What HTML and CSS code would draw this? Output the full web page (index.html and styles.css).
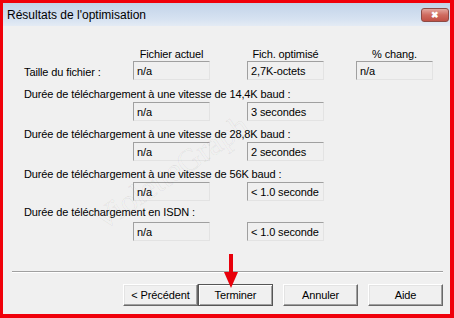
FILE: index.html
```html
<!DOCTYPE html>
<html lang="fr">
<head>
    <meta charset="UTF-8">
    <title>Résultats de l'optimisation</title>
    <link rel="stylesheet" href="styles.css">
</head>
<body>
    <div class="window">
        <div class="titlebar">
            <span class="title">Résultats de l'optimisation</span>
            <span class="close">&#10006;</span>
        </div>
        <div class="content">
            <div class="row heads">
                <span class="col-head">Fichier actuel</span>
                <span class="col-head gap1">Fich. optimisé</span>
                <span class="col-head gap2">% chang.</span>
            </div>
            <div class="row first">
                <span class="label-inline">Taille du fichier :</span>
                <span class="field">n/a</span>
                <span class="field gap1">2,7K-octets</span>
                <span class="field gap2">n/a</span>
            </div>

            <div class="label l2">Durée de téléchargement à une vitesse de 14,4K baud :</div>
            <div class="row boxes">
                <span class="field">n/a</span>
                <span class="field gap1">3 secondes</span>
            </div>

            <div class="label l3">Durée de téléchargement à une vitesse de 28,8K baud :</div>
            <div class="row boxes">
                <span class="field">n/a</span>
                <span class="field gap1">2 secondes</span>
            </div>

            <div class="label l4">Durée de téléchargement à une vitesse de 56K baud :</div>
            <div class="row boxes">
                <span class="field">n/a</span>
                <span class="field gap1">&lt; 1.0 seconde</span>
            </div>

            <div class="label l5">Durée de téléchargement en ISDN :</div>
            <div class="row boxes">
                <span class="field">n/a</span>
                <span class="field gap1">&lt; 1.0 seconde</span>
            </div>

            <div class="watermark">VioletteGraph</div>
        </div>
        <div class="footer">
            <div class="separator"></div>
            <div class="buttons">
                <button class="btn">&lt; Précédent</button>
                <button class="btn default">Terminer</button>
                <button class="btn spaced">Annuler</button>
                <button class="btn spaced">Aide</button>
                <svg class="arrow" width="16" height="34" viewBox="0 0 16 34">
                    <path d="M6 0 H10 V18 H15 L8 34 L1 18 H6 Z" fill="#e8000b"/>
                </svg>
            </div>
        </div>
    </div>
</body>
</html>
```

FILE: styles.css
```css
body {
    margin: 0;
    font-family: "Liberation Sans", Arial, sans-serif;
    font-size: 11px;
    letter-spacing: -0.12px;
    color: #000;
}
.window {
    width: 454px;
    height: 318px;
    box-sizing: border-box;
    border: 3px solid #f0000a;
    border-right-width: 4px;
    border-bottom-width: 4px;
    background-color: #f0f0f0;
    display: flex;
    flex-direction: column;
}
.titlebar {
    height: 23px;
    display: flex;
    align-items: center;
    padding: 0 0 0 4px;
    background: linear-gradient(#c2d3e8, #d6e2f1 70%, #e4ebf4);
}
.title {
    font-size: 12px;
    letter-spacing: 0;
}
.close {
    margin-left: auto;
    margin-right: 1px;
    width: 28px;
    height: 14px;
    box-sizing: border-box;
    border: 1px solid #8d4b45;
    border-radius: 3px;
    background: linear-gradient(#e4a79e, #cf6b5f 50%, #c05045);
    color: #fff;
    font-size: 9px;
    line-height: 12px;
    text-align: center;
    font-weight: bold;
}
.content {
    position: relative;
    padding: 21px 0 0 21px;
}
.row {
    display: flex;
    align-items: center;
}
.heads {
    height: 14px;
    padding-left: 109px;
}
.col-head {
    width: 77px;
    text-align: center;
}
.gap1 {
    margin-left: 37px;
}
.gap2 {
    margin-left: 32px;
}
.label-inline {
    width: 109px;
    padding-top: 3px;
}
.field {
    width: 77px;
    height: 19px;
    box-sizing: border-box;
    padding: 1px 0 0 3px;
    border: 1px solid;
    border-color: #a0a0a0 #e3e3e3 #e3e3e3 #a0a0a0;
    line-height: 16px;
}
.label {
    line-height: 14px;
    margin-bottom: 1px;
}
.l2 {
    margin-top: 7px;
}
.l3, .l4 {
    margin-top: 6px;
}
.l5 {
    margin-top: 4px;
    margin-bottom: 3px;
}
.boxes {
    padding-left: 109px;
}
.watermark {
    position: absolute;
    left: 78px;
    top: 128px;
    font-family: "Liberation Serif", serif;
    font-size: 32px;
    color: transparent;
    -webkit-text-stroke: 0.6px rgba(0, 0, 0, 0.08);
    transform: rotate(-34deg);
    pointer-events: none;
}
.footer {
    margin-top: auto;
    padding: 0 7px 8px 9px;
}
.separator {
    height: 1px;
    background-color: #a0a0a0;
    border-bottom: 1px solid #fff;
    margin-bottom: 11px;
}
.buttons {
    position: relative;
    display: flex;
    justify-content: flex-end;
}
.btn {
    width: 75px;
    height: 22px;
    padding: 0;
    font-family: "Liberation Sans", Arial, sans-serif;
    font-size: 11px;
    letter-spacing: -0.12px;
    color: #000;
    background-color: #f0f0f0;
    border: 1px solid;
    border-color: #fff #696969 #696969 #fff;
    box-shadow: inset -1px -1px #a0a0a0, inset 1px 1px #e3e3e3;
}
.default {
    border-color: #555;
    box-shadow: inset 1px 1px #fff, inset -1px -1px #a0a0a0;
}
.spaced {
    margin-left: 10px;
}
.arrow {
    position: absolute;
    left: 211px;
    top: -30px;
}
```
